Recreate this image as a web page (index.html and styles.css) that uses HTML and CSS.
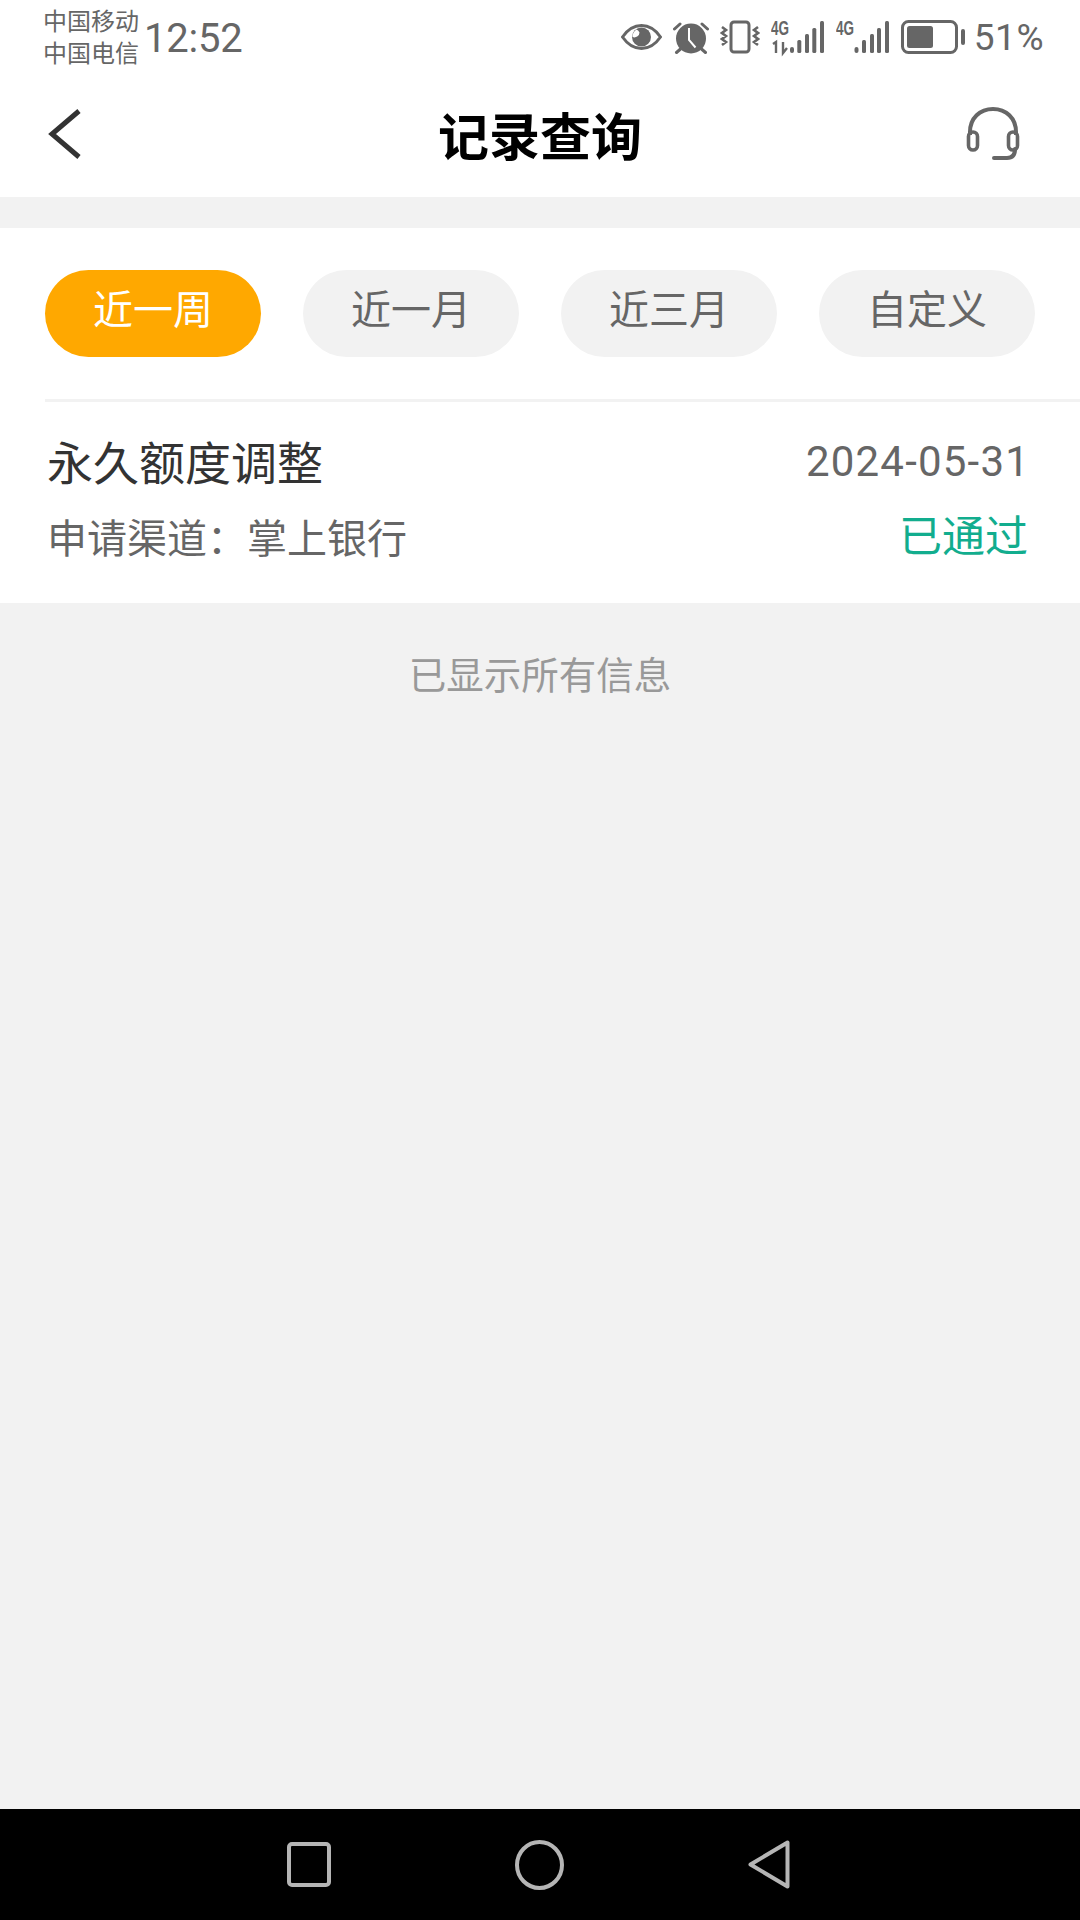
FILE: index.html
```html
<!DOCTYPE html>
<html lang="zh-CN">
<head>
<meta charset="utf-8">
<title>记录查询</title>
<link rel="stylesheet" href="styles.css">
</head>
<body>
<div class="app">
  <header class="top">
    <div class="status">
      <div class="carriers"><span>中国移动</span><span>中国电信</span></div>
      <div class="time">12:52</div>
      <div class="status-right">
        <svg class="ic-eye" width="41" height="28" viewBox="0 0 41 28"><path d="M1.500 14C7 6 13 2.500 20.500 2.500S34 6 39.500 14C34 22 28 25.500 20.500 25.500S7 22 1.500 14Z" fill="none" stroke="#666" stroke-width="3"/><circle cx="20.500" cy="14" r="9.500" fill="#666"/><path d="M11.500 14a5 5 0 0 0 7-4.500a5 5 0 0 0-3-3a9 9 0 0 0-4 7.500Z" fill="#fff"/></svg>
        <svg class="ic-alarm" width="36" height="33" viewBox="0 0 36 33"><circle cx="18" cy="17.500" r="15" fill="#666"/><path d="M1.500 8 7 3M34.500 8 29 3M3.500 31.500l4-3.500M32.500 31.500l-4-3.500" stroke="#666" stroke-width="3" stroke-linecap="round"/><path d="M16 7v12l6.500 7.500" fill="none" stroke="#fff" stroke-width="2"/></svg>
        <svg class="ic-vib" width="40" height="34" viewBox="0 0 40 34"><rect x="11" y="2" width="18" height="30" rx="3" fill="none" stroke="#666" stroke-width="3"/><path d="M2 7l4 3-4 3 4 3-4 3 4 3-4 3M38 7l-4 3 4 3-4 3 4 3-4 3 4 3" fill="none" stroke="#666" stroke-width="2.600"/></svg>
        <svg class="ic-sig" width="54" height="44" viewBox="0 -6 54 44"><text x="0" y="15" class="net" textLength="18" lengthAdjust="spacingAndGlyphs">4G</text><path d="M2 24l3-2v11M12 22v11l4-5" fill="none" stroke="#666" stroke-width="2.400"/><rect x="19" y="27" width="4" height="6" rx="2" fill="#666"/><rect x="26.300" y="20" width="4" height="13" rx="1.500" fill="#666"/><rect x="34" y="14" width="4" height="19" rx="1.500" fill="#666"/><rect x="41.300" y="8" width="4" height="25" rx="1.500" fill="#666"/><rect x="49" y="1" width="4" height="32" rx="1.500" fill="#666"/></svg>
        <svg class="ic-sig" width="54" height="44" viewBox="0 -6 54 44"><text x="0" y="15" class="net" textLength="18" lengthAdjust="spacingAndGlyphs">4G</text><rect x="18.500" y="27" width="4" height="6" rx="2" fill="#666"/><rect x="26" y="20" width="4" height="13" rx="1.500" fill="#666"/><rect x="34" y="14" width="4" height="19" rx="1.500" fill="#666"/><rect x="41" y="8" width="4" height="25" rx="1.500" fill="#666"/><rect x="49" y="1" width="4" height="32" rx="1.500" fill="#666"/></svg>
        <svg class="ic-bat" width="64" height="34" viewBox="0 0 64 34"><rect x="1.500" y="1.500" width="54" height="31" rx="6" fill="none" stroke="#666" stroke-width="3"/><rect x="6" y="6" width="26" height="22" rx="2.500" fill="#666"/><rect x="60" y="9" width="4" height="16" rx="2" fill="#666"/></svg>
        <span class="pct">51%</span>
      </div>
    </div>
    <nav class="navbar">
      <svg class="back" width="33" height="50" viewBox="0 0 33 50"><path d="M31 2 4 25l27 23" fill="none" stroke="#333" stroke-width="5"/></svg>
      <h1 class="title">记录查询</h1>
      <svg class="headset" width="54" height="54" viewBox="0 0 54 54"><path d="M4 28V25C4 11 14 2 27 2s23 9 23 23v3" fill="none" stroke="#666" stroke-width="4"/><rect x="2.500" y="25" width="9" height="18" rx="4.500" fill="none" stroke="#666" stroke-width="3.600"/><rect x="42.500" y="25" width="9" height="18" rx="4.500" fill="none" stroke="#666" stroke-width="3.600"/><path d="M49 42c0 6-3 9-8 9H28" fill="none" stroke="#666" stroke-width="4" stroke-linecap="round"/></svg>
    </nav>
  </header>
  <main class="content">
    <section class="panel">
      <div class="filters">
        <button class="pill pill-on">近一周</button>
        <button class="pill">近一月</button>
        <button class="pill">近三月</button>
        <button class="pill">自定义</button>
      </div>
      <div class="record">
        <div class="row row-main">
          <span class="rec-title">永久额度调整</span>
          <span class="rec-date">2024-05-31</span>
        </div>
        <div class="row row-sub">
          <span class="rec-channel">申请渠道：掌上银行</span>
          <span class="rec-status">已通过</span>
        </div>
      </div>
    </section>
    <p class="end-note">已显示所有信息</p>
  </main>
  <footer class="sysnav">
    <svg width="44" height="45" viewBox="0 0 44 45"><rect x="2" y="2" width="40" height="41" rx="3" fill="none" stroke="#b5b5b5" stroke-width="4"/></svg>
    <svg width="49" height="50" viewBox="0 0 49 50"><ellipse cx="24.500" cy="25" rx="22.500" ry="23" fill="none" stroke="#b5b5b5" stroke-width="4"/></svg>
    <svg width="42" height="49" viewBox="0 0 42 49"><path d="M39.500 2.500v44L2.500 24.500Z" fill="none" stroke="#b5b5b5" stroke-width="4" stroke-linejoin="round"/></svg>
  </footer>
</div>
</body>
</html>
```
FILE: styles.css
```css
* { box-sizing: border-box; }
html, body { margin: 0; padding: 0; }
body { font-family: "Noto Sans CJK SC", "Noto Sans", sans-serif; }
.app { width: 1080px; height: 1920px; display: flex; flex-direction: column; background: #f2f2f2; overflow: hidden; }

.top { background: #fff; height: 197px; display: flex; flex-direction: column; }
.status { height: 72px; display: flex; align-items: center; padding: 0 36px 0 43px; color: #666; }
.carriers { display: flex; flex-direction: column; font-size: 24px; line-height: 32px; width: 101px; }
.time { font-family: Roboto, sans-serif; font-size: 40px; letter-spacing: -0.25px; margin-top: 5px; }
.status-right { margin-left: auto; display: flex; align-items: center; gap: 11px; margin-top: 2px; }
.ic-sig { margin-top: -2px; }
.net { font: 700 20px "Liberation Sans", sans-serif; fill: #666; }
.pct { font-family: Roboto, sans-serif; font-size: 37px; letter-spacing: 0.5px; margin-left: -2px; }

.navbar { flex: 1; display: grid; grid-template-columns: 1fr auto 1fr; align-items: center; padding: 0 48px; margin-top: -3px; }
.title { margin: 2px 0 0; font-size: 51px; font-weight: 700; color: #000; line-height: 60px; }
.back { margin-top: 2px; }
.headset { justify-self: end; margin: 2px 12px 0 0; }

.content { flex: 1; display: flex; flex-direction: column; padding-top: 31px; }
.panel { background: #fff; height: 375px; }
.filters { margin-left: 45px; padding: 42px 45px 0 0; height: 174px; display: flex; gap: 42px; border-bottom: 3px solid #f2f2f2; }
.pill { width: 216px; height: 87px; border: 0; border-radius: 44px; background: #f2f2f2; color: #666; font: 400 40px/60px "Noto Sans CJK SC", sans-serif; padding: 0 0 14px; }
.pill-on { background: #ffa800; color: #fff; }

.record { padding: 29px 52px 0 47px; display: flex; flex-direction: column; }
.row { display: flex; justify-content: space-between; align-items: center; }
.row-main { height: 62px; }
.row-sub { height: 62px; margin-top: 12px; }
.rec-title { font-size: 46px; color: #333; margin-top: -4px; }
.rec-date { font-family: Roboto, sans-serif; font-size: 42px; letter-spacing: 1.2px; color: #666; margin: -2px -2px 0 0; }
.rec-channel { font-size: 40px; color: #666; }
.rec-status { font-size: 43px; color: #12ad8e; margin-top: -6px; }

.end-note { margin: 44px 0 0; text-align: center; font-size: 37.500px; line-height: 52px; color: #999; }

.sysnav { height: 111px; background: #000; display: flex; align-items: center; padding-left: 287px; }
.sysnav svg:nth-child(1) { margin-right: 184px; }
.sysnav svg:nth-child(2) { margin-right: 184px; }
```
